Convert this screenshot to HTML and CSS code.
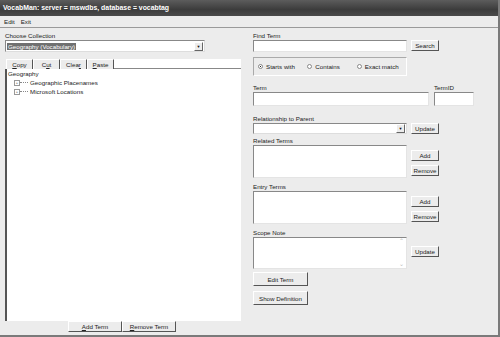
FILE: index.html
```html
<!DOCTYPE html>
<html lang="en">
  <head>
    <meta charset="UTF-8" />
    <title>VocabMan</title>
    <link rel="stylesheet" href="styles.css">
  </head>
  <body>
    <div class="window">
      <div class="titlebar">VocabMan: server = mswdbs, database = vocabtag</div>
      <div class="menubar">
        <span>Edit</span>
        <span>Exit</span>
      </div>
      <div class="main">
        <div class="left">
          <div class="label">Choose Collection</div>
          <div class="select collection">
            <span class="value"><span class="hl">Geography (Vocabulary)</span></span>
            <span class="arrow">&#9660;</span>
          </div>
          <div class="toolbar">
            <button class="btn tab"><u>C</u>opy</button>
            <button class="btn tab">C<u>u</u>t</button>
            <button class="btn tab">Clea<u>r</u></button>
            <button class="btn tab"><u>P</u>aste</button>
            <div class="tab-fill"></div>
          </div>
          <div class="tree">
            <div class="node root">Geography</div>
            <div class="node"><span class="expander">+</span><span class="dots"></span>Geographic Placenames</div>
            <div class="node"><span class="expander">+</span><span class="dots"></span>Microsoft Locations</div>
          </div>
          <div class="bottom-buttons">
            <button class="btn wide"><u>A</u>dd Term</button>
            <button class="btn wide"><u>R</u>emove Term</button>
          </div>
        </div>

        <div class="right">
          <div class="label">Find Term</div>
          <div class="row">
            <div class="input find"></div>
            <button class="btn small">Search</button>
          </div>
          <div class="radios">
            <span class="radio checked">Starts with</span>
            <span class="radio">Contains</span>
            <span class="radio">Exact match</span>
          </div>

          <div class="row term-row">
            <div class="col">
              <div class="label">Term</div>
              <div class="input term"></div>
            </div>
            <div class="col">
              <div class="label">TermID</div>
              <div class="input termid"></div>
            </div>
          </div>

          <div class="label gap">Relationship to Parent</div>
          <div class="row rel-row">
            <div class="select rel"><span class="value"></span><span class="arrow">&#9660;</span></div>
            <button class="btn small">Update</button>
          </div>

          <div class="label">Related Terms</div>
          <div class="row">
            <div class="input list"></div>
            <div class="side">
              <button class="btn small">Add</button>
              <button class="btn small">Remove</button>
            </div>
          </div>

          <div class="label">Entry Terms</div>
          <div class="row">
            <div class="input list"></div>
            <div class="side">
              <button class="btn small">Add</button>
              <button class="btn small">Remove</button>
            </div>
          </div>

          <div class="label">Scope Note</div>
          <div class="row">
            <div class="input list note">
              <div class="scroll">
                <span>&#8963;</span>
                <span>&#8964;</span>
              </div>
            </div>
            <div class="side note-side">
              <button class="btn small">Update</button>
            </div>
          </div>

          <button class="btn action">Edit Term</button>
          <button class="btn action">Show Definition</button>
        </div>
      </div>
    </div>
  </body>
</html>
```

FILE: styles.css
```css
body {
  margin: 0;
  font-family: "Liberation Sans", Arial, sans-serif;
  font-size: 6.2px;
  color: #222;
  background: #ececec;
}
.window {
  width: 500px;
  height: 337px;
  box-sizing: border-box;
  background: #ececec;
  border-right: 2px solid #7a7a7a;
  border-bottom: 2px solid #7a7a7a;
  overflow: hidden;
}
.titlebar {
  height: 16px;
  line-height: 15px;
  padding-left: 3px;
  background: linear-gradient(#5c5c5c, #3c3c3c 60%, #4a4a4a);
  color: #fff;
  font-weight: bold;
  font-size: 6.9px;
}
.menubar {
  height: 11px;
  line-height: 11px;
  padding-left: 4px;
  border-bottom: 1px solid #9a9a9a;
  display: flex;
  gap: 6px;
  background: #ececec;
}
.main {
  display: flex;
  padding: 3px 0 0 5px;
  gap: 12px;
}
.label {
  height: 9px;
  line-height: 9px;
  white-space: nowrap;
}
.left {
  width: 236px;
  display: flex;
  flex-direction: column;
}
.select {
  height: 12px;
  box-sizing: border-box;
  background: #fff;
  border: 1px solid #888;
  border-right-color: #ddd;
  border-bottom-color: #ddd;
  display: flex;
  align-items: center;
}
.select .value {
  flex: 1;
  padding-left: 1px;
}
.select .arrow {
  width: 9px;
  height: 9px;
  margin-right: 1px;
  box-sizing: border-box;
  background: #ececec;
  border: 1px solid;
  border-color: #fff #666 #666 #fff;
  font-size: 4px;
  line-height: 8px;
  text-align: center;
  color: #111;
}
.collection {
  width: 200px;
}
.hl {
  background: #707070;
  color: #fff;
  padding: 0 1px;
}
.toolbar {
  display: flex;
  margin-top: 7px;
  height: 10px;
}
.btn {
  font-family: inherit;
  font-size: 6.2px;
  color: #222;
  background: #ececec;
  border: 1px solid;
  border-color: #fff #555 #555 #fff;
  padding: 0;
  margin: 0;
  height: 11px;
  line-height: 9px;
}
.tab {
  width: 27px;
  height: 10px;
  line-height: 8px;
  border-bottom: none;
}
.tab:first-child {
  margin-left: 1px;
}
.tab-fill {
  flex: 1;
  background: #fff;
  border-bottom: 1px solid #888;
}
.tree {
  height: 252px;
  background: #fff;
  border-left: 2px solid #555;
  padding: 0 0 0 1px;
}
.node {
  height: 9px;
  line-height: 9px;
  display: flex;
  align-items: center;
  padding-left: 6px;
}
.node.root {
  padding-left: 0;
}
.expander {
  width: 4px;
  height: 4px;
  border: 1px solid #999;
  font-size: 4px;
  line-height: 4px;
  text-align: center;
  color: #333;
}
.dots {
  width: 8px;
  border-top: 1px dotted #888;
  margin-right: 2px;
}
.bottom-buttons {
  display: flex;
  padding-left: 63px;
}
.btn.wide {
  width: 54px;
}
.right {
  width: 225px;
  display: flex;
  flex-direction: column;
}
.row {
  display: flex;
  gap: 4px;
  align-items: flex-start;
}
.input {
  background: #fff;
  box-sizing: border-box;
  border: 1px solid #888;
  border-right-color: #e4e4e4;
  border-bottom-color: #e4e4e4;
}
.find {
  width: 154px;
  height: 12px;
}
.btn.small {
  width: 28px;
}
.radios {
  width: 154px;
  height: 19px;
  box-sizing: border-box;
  margin-top: 5px;
  border: 1px solid #aaa;
  border-right-color: #fff;
  border-bottom-color: #fff;
  display: flex;
  align-items: center;
  padding-left: 4px;
}
.radio {
  display: flex;
  align-items: center;
  gap: 3px;
  width: 50px;
}
.radio::before {
  content: "";
  width: 5px;
  height: 5px;
  border-radius: 50%;
  border: 1px solid #888;
  background: #fff;
  box-sizing: border-box;
}
.radio.checked::before {
  background: radial-gradient(#222 35%, #fff 45%);
}
.term-row {
  margin-top: 7px;
  gap: 5px;
}
.term {
  width: 176px;
  height: 14px;
}
.termid {
  width: 40px;
  height: 14px;
}
.gap {
  margin-top: 8px;
}
.rel {
  width: 154px;
  height: 11px;
}
.rel-row {
  margin-bottom: 2px;
}
.list {
  width: 154px;
  height: 33px;
  margin-bottom: 4px;
}
.side {
  display: flex;
  flex-direction: column;
  gap: 4px;
  padding-top: 5px;
}
.note {
  display: flex;
  justify-content: flex-end;
  height: 32px;
  margin-bottom: 3px;
}
.scroll {
  width: 9px;
  display: flex;
  flex-direction: column;
  justify-content: space-between;
  color: #bbb;
  font-size: 6px;
  text-align: center;
  line-height: 7px;
}
.note-side {
  padding-top: 9px;
}
.btn.action {
  width: 55px;
  height: 14px;
  margin-bottom: 5px;
}
```
